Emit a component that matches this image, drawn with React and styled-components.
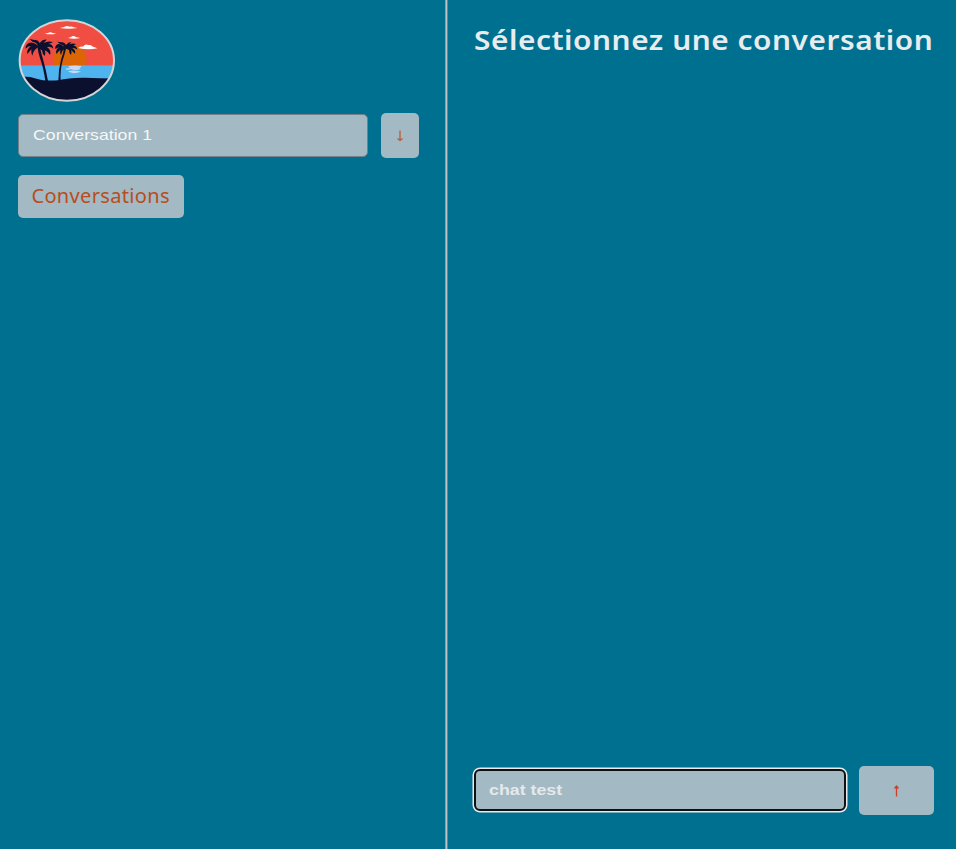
import React, { useState } from "react";
import styled, { createGlobalStyle } from "styled-components";

const GlobalStyle = createGlobalStyle`
  * { box-sizing: border-box; }
  body {
    margin: 0;
    background: #007090;
    overflow: hidden;
  }
`;

const Page = styled.div`
  display: grid;
  grid-template-columns: 445px 3px 1fr;
  height: 849px;
  background: #007090;
`;

const Sidebar = styled.aside`
  display: flex;
  flex-direction: column;
  align-items: flex-start;
  padding: 19px 0 0 18px;
`;

const Divider = styled.div`
  background: linear-gradient(to right, #829faa 0 1px, #c0c2c4 1px 2px, #4d8fa4 2px 3px);
`;

const Logo = styled.svg`
  display: block;
  width: 97px;
  height: 83px;
`;

const CreateRow = styled.form`
  display: flex;
  align-items: center;
  gap: 13px;
  margin-top: 11px;
`;

const Field = styled.div`
  width: ${(p) => p.$width}px;
  height: 43px;
  overflow: hidden;
  border-radius: 5px;
  background: #a3b9c3;
  border: 1px solid #75828a;
  padding: 0 0 2px 14px;
  ${(p) =>
    p.$focused &&
    `
    border: 2px solid #101010;
    border-radius: 6px;
    box-shadow: 0 0 0 1.5px #e9ecee;
    height: 42px;
    margin-bottom: 1px;
    padding-left: 13px;
  `}
`;

const TextInput = styled.input`
  display: block;
  width: 80%;
  height: 100%;
  padding: 0;
  border: 0;
  outline: 0;
  background: transparent;
  color: ${(p) => (p.$bold ? "#e4e9eb" : "#f5f7f8")};
  font: ${(p) => (p.$bold ? 700 : 400)} 15px "Liberation Sans", Arial, sans-serif;
  transform: scaleX(${(p) => p.$stretch});
  transform-origin: left center;
`;

const Button = styled.button`
  display: flex;
  align-items: center;
  justify-content: center;
  width: ${(p) => p.$width}px;
  height: ${(p) => p.$height}px;
  padding: 0;
  border: 0;
  border-radius: 5px;
  background: #a3b9c3;
  color: #b94d1b;
  font: 400 19px "Noto Sans", sans-serif;
`;

const ButtonLabel = styled.span`
  display: block;
  padding-bottom: 2px;
  white-space: nowrap;
  letter-spacing: 0.3px;
  transform: scaleX(1.055);
`;

const ListButton = styled(Button)`
  margin-top: 17px;
`;

const Arrow = styled.svg`
  display: block;
  width: 10px;
  height: 14px;
  margin-top: 1px;
`;

const Chat = styled.main`
  display: flex;
  flex-direction: column;
  justify-content: space-between;
  padding: 20px 22px 34px 26px;
`;

const Title = styled.h1`
  width: max-content;
  margin: 0;
  color: #e9ecee;
  font: 600 27px/40px "Noto Sans", sans-serif;
  letter-spacing: 0.5px;
  white-space: nowrap;
  transform: scaleX(1.104);
  transform-origin: left center;
`;

const Composer = styled.form`
  display: flex;
  align-items: center;
  justify-content: space-between;
`;

function BeachLogo() {
  return (
    <Logo viewBox="24 27 291 249" role="img" aria-label="Plage">
      <defs>
        <clipPath id="oval">
          <ellipse cx="170.5" cy="151.5" rx="141" ry="120" />
        </clipPath>
      </defs>
      <g clipPath="url(#oval)">
        <rect x="24" y="27" width="291" height="140" fill="#f04e43" />
        <ellipse cx="180" cy="150" rx="50" ry="48" fill="#dc6505" />
        <rect x="24" y="166" width="291" height="60" fill="#4fb3ee" />
        <path d="M24 200 Q58 198 80 206 T145 211 Q178 202 225 203 T315 206 V280 H24Z" fill="#0b102e" />
        <g fill="#fff">
          <path d="M149 54 Q158 52 164 50 Q171 46 178 50 Q187 49 191 52 L202 54 Q176 58 149 54Z" />
          <path d="M104 71 L114 69 Q121 64 128 69 L139 71 Q122 74 104 71Z" />
          <path d="M174 84 L183 81 Q190 75 197 81 L211 84 Q192 88 174 84Z" />
          <path d="M204 114 Q213 109 219 110 Q225 101 235 105 Q244 104 246 109 L262 115 Q235 121 204 114Z" />
        </g>
        <g fill="#c9d9f3">
          <path d="M174 169 Q192 165 214 168 Q215 173 207 174 Q216 178 205 179 Q190 181 184 178 Q165 181 167 176 Q172 175 180 174Z" />
          <path d="M174 184 Q191 179 213 185 Q202 188 190 190 L178 186Z" />
        </g>
        <g fill="#0b102e">
          <path d="M82 108 L89 108 Q93 128 99 148 Q108 180 114 213 H106 Q101 177 92 151 Q84 128 82 108Z" />
          <path d="M84 107 Q67 94 57 99 Q45 105 47 116 Q53 108 63 108 Q49 118 52 132 L64 118 Q63 130 67 137 Q71 119 84 112 Q91 119 96 121 Q97 133 104 138 Q108 128 104 121 Q114 124 120 135 Q125 120 111 111 Q123 109 130 116 Q128 101 115 102 L129 97 Q116 91 101 99 L110 89 Q99 87 89 99 Q84 88 74 90 L58 87 L69 96 Q79 97 84 107Z" />
          <path d="M162 113 H169 Q164 133 158 151 Q150 180 152 213 H145 Q145 180 153 150 Q161 128 162 113Z" />
          <path d="M164 111 Q152 100 144 102 Q134 107 136 117 L148 111 Q135 120 139 132 L151 119 Q149 128 153 134 Q156 121 165 115 L177 120 Q177 130 183 135 Q187 126 183 120 L195 131 Q198 121 187 114 Q196 113 202 119 Q200 106 190 107 L198 102 Q187 98 178 103 L184 96 Q174 96 168 105 Q163 95 155 97 L142 95 L150 102 Q160 103 164 111Z" />
        </g>
        <g fill="none" stroke="#d43d36" strokeWidth="1.3" opacity=".55">
          <path d="M136 83 l6-2 m6 1 l6-5 m1 8 l5 1 m-22 6 l7-1 M251 89 l7-4 m7 4 l7 5 m-19 7 l8 1 m8-4 l7-5" />
        </g>
      </g>
      <ellipse cx="170.5" cy="151.5" rx="141.5" ry="120.5" fill="none" stroke="#d5d4d6" strokeWidth="6" />
    </Logo>
  );
}

function ArrowIcon({ up }) {
  return (
    <Arrow viewBox="0 0 10 14" fill="none" stroke={up ? "#cb3f2c" : "#bd5b32"} strokeWidth="1.3">
      {up ? <path d="M4.5 12.5 V2 M2.5 4.5 L4.5 2 L6.5 4.5" /> : <path d="M5 1.5 V11.5 M2.5 9.5 L5 11.5 L7.5 9.5" />}
    </Arrow>
  );
}

export default function App() {
  const [name, setName] = useState("Conversation 1");
  const [message, setMessage] = useState("chat test");

  return (
    <>
      <GlobalStyle />
      <Page>
        <Sidebar>
          <BeachLogo />
          <CreateRow onSubmit={(e) => e.preventDefault()}>
            <Field $width={350}>
              <TextInput $stretch={1.18} value={name} onChange={(e) => setName(e.target.value)} />
            </Field>
            <Button $width={38} $height={45} aria-label="Créer">
              <ArrowIcon />
            </Button>
          </CreateRow>
          <ListButton $width={166} $height={43}>
            <ButtonLabel>Conversations</ButtonLabel>
          </ListButton>
        </Sidebar>
        <Divider />
        <Chat>
          <Title>Sélectionnez une conversation</Title>
          <Composer onSubmit={(e) => e.preventDefault()}>
            <Field $width={372} $focused>
              <TextInput $bold $stretch={1.185} value={message} onChange={(e) => setMessage(e.target.value)} />
            </Field>
            <Button $width={75} $height={49} aria-label="Envoyer">
              <ArrowIcon up />
            </Button>
          </Composer>
        </Chat>
      </Page>
    </>
  );
}
